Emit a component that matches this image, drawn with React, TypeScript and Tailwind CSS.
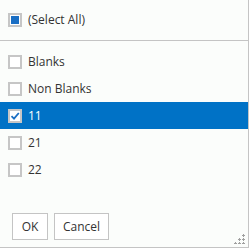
import React from 'react'

const items = [
  { label: 'Blanks', checked: false },
  { label: 'Non Blanks', checked: false },
  { label: '11', checked: true },
  { label: '21', checked: false },
  { label: '22', checked: false },
]

function Box({ checked, partial }: { checked?: boolean; partial?: boolean }) {
  return (
    <span className="w-[14px] h-[14px] border-2 border-[#c6c6c6] bg-white flex items-center justify-center shrink-0">
      {partial && <span className="w-[8px] h-[8px] bg-[#1a6fc4]" />}
      {checked && (
        <svg width="10" height="10" viewBox="0 0 10 10">
          <path d="M1.5 5.2 L4 7.6 L8.8 2" fill="none" stroke="#1a6fc4" strokeWidth="1.8" />
        </svg>
      )}
    </span>
  )
}

export default function App() {
  return (
    <div
      className="w-[249px] h-[248px] bg-[#fbfdfb] border-r border-b border-[#c4c4c4] flex flex-col text-[12px] text-[#333] relative"
      style={{ fontFamily: '"Open Sans", "Noto Sans", sans-serif' }}
    >
      {/* Header */}
      <div className="h-[41px] border-b border-[#c4c4c4] flex items-center pl-[8px] gap-[6px]">
        <Box partial />
        <span>(Select All)</span>
      </div>

      {/* List */}
      <div className="pt-[7px] flex flex-col">
        {items.map(it => (
          <div
            key={it.label}
            className={
              'h-[27px] flex items-center pl-[8px] gap-[6px] ' +
              (it.checked ? 'bg-[#0072c6] text-white' : '')
            }
          >
            <Box checked={it.checked} />
            <span>{it.label}</span>
          </div>
        ))}
      </div>

      {/* Buttons */}
      <div className="mt-[30px] pl-[12px] flex gap-[6px]">
        <button className="w-[36px] h-[27px] border border-[#c4c4c4] bg-white text-[#333]">OK</button>
        <button className="w-[55px] h-[27px] border border-[#c4c4c4] bg-white text-[#333]">Cancel</button>
      </div>

      {/* Resize grip */}
      <svg className="absolute right-[3px] bottom-[3px]" width="11" height="11" viewBox="0 0 11 11">
        {[
          [8, 1], [4, 5], [8, 5], [0, 9], [4, 9], [8, 9],
        ].map(([x, y]) => (
          <g key={`${x}-${y}`} fill="#a0a0a0">
            <rect x={x} y={y + 1} width="3" height="1" />
            <rect x={x + 1} y={y} width="1" height="3" />
          </g>
        ))}
      </svg>
    </div>
  )
}
